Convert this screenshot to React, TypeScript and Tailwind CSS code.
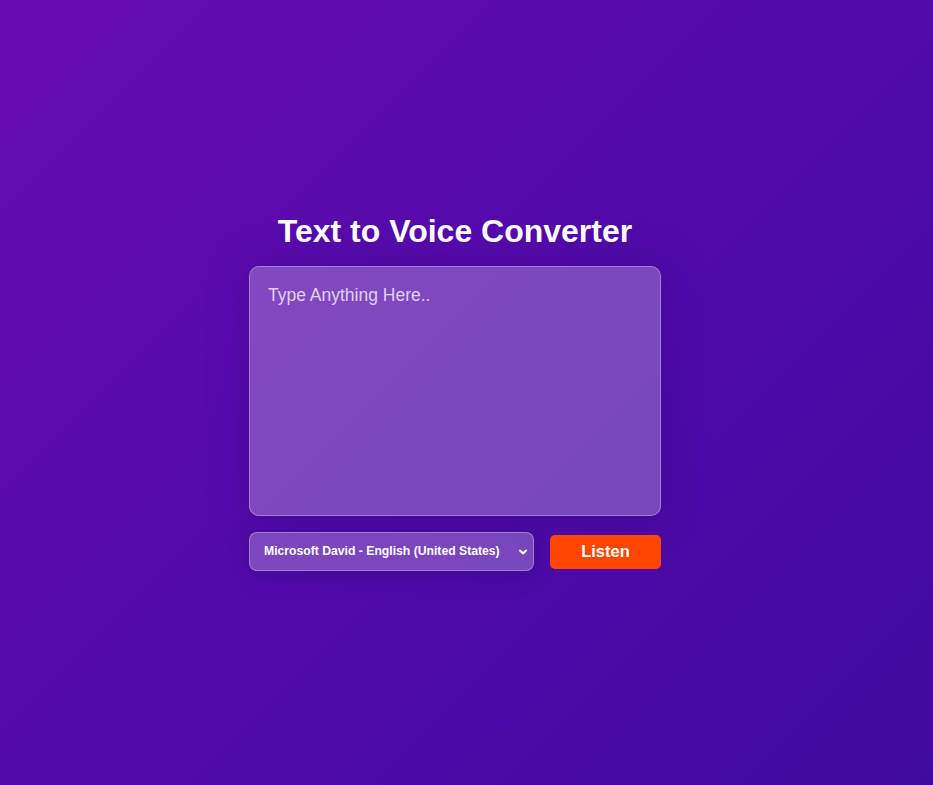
import { useState } from "react";

export default function App() {
  const [text, setText] = useState("");

  const speak = () => {
    if (!text || typeof window === "undefined" || !window.speechSynthesis) return;
    window.speechSynthesis.speak(new SpeechSynthesisUtterance(text));
  };

  return (
    <div
      className="min-h-screen w-full flex items-center justify-center pr-[23px] bg-[linear-gradient(135deg,#660bb2_0%,#510aaa_50%,#410a9e_100%)]"
      style={{ fontFamily: '"Liberation Sans", Arial, sans-serif' }}
    >
      <div className="w-[412px] flex flex-col items-center">
        <h1 className="text-[32px] font-bold text-white leading-[37px] mb-[16px] -mt-[1px]">
          Text to Voice Converter
        </h1>

        <textarea
          value={text}
          onChange={(e) => setText(e.target.value)}
          placeholder="Type Anything Here.."
          className="w-[412px] h-[250px] resize-none rounded-[10px] border border-white/30 bg-white/25 px-[18px] pt-[17px] pb-[18px] text-[17.5px] leading-[22px] text-white placeholder:text-white/75 outline-none shadow-[0_0_40px_rgba(50,0,110,0.35)]"
        />

        <div className="w-full flex items-center justify-between mt-4">
          <div className="relative w-[285px] h-[39px]">
            <select className="w-full h-full appearance-none rounded-[8px] border border-white/30 bg-white/25 pl-[14px] pr-8 text-[12.2px] font-bold text-white outline-none shadow-[0_4px_20px_rgba(40,0,100,0.35)]">
              <option className="text-black">Microsoft David - English (United States)</option>
              <option className="text-black">Microsoft Zira - English (United States)</option>
              <option className="text-black">Google US English</option>
            </select>
            <svg
              className="absolute right-[6px] top-1/2 -translate-y-1/2 pointer-events-none"
              width="10"
              height="10"
              viewBox="0 0 10 10"
              fill="none"
            >
              <path d="M2 3.5 L5 6.5 L8 3.5" stroke="white" strokeWidth="2" strokeLinecap="round" strokeLinejoin="round" />
            </svg>
          </div>

          <button
            onClick={speak}
            className="w-[111px] h-[34px] rounded-[5px] bg-[#ff4500] text-white text-[16.5px] font-bold"
          >
            Listen
          </button>
        </div>
      </div>
    </div>
  );
}
